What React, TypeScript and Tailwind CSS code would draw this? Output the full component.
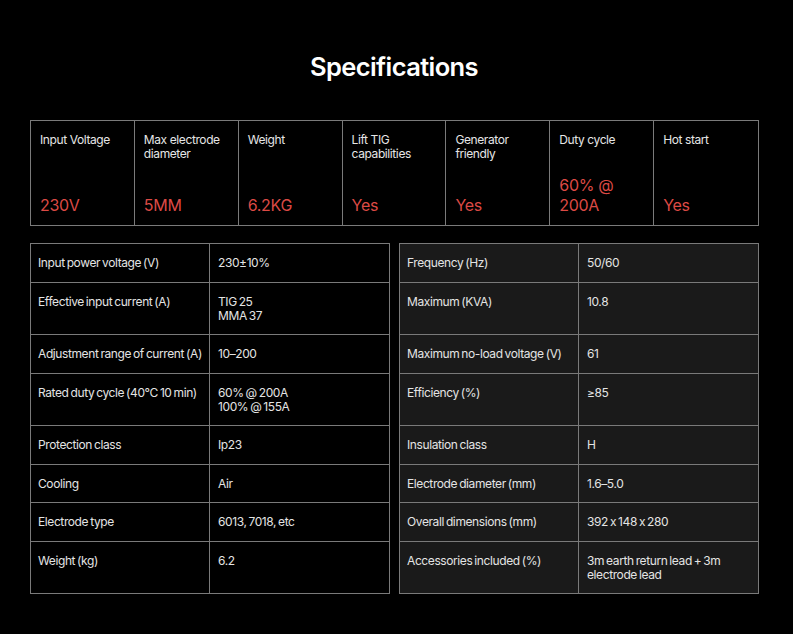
import React from 'react'

// Headline figures shown across the top strip
const HIGHLIGHTS: { label: string; value: string }[] = [
  { label: 'Input Voltage', value: '230V' },
  { label: 'Max electrode diameter', value: '5MM' },
  { label: 'Weight', value: '6.2KG' },
  { label: 'Lift TIG capabilities', value: 'Yes' },
  { label: 'Generator friendly', value: 'Yes' },
  { label: 'Duty cycle', value: '60% @ 200A' },
  { label: 'Hot start', value: 'Yes' },
]

type Row = [string, string[]]

const LEFT: Row[] = [
  ['Input power voltage (V)', ['230±10%']],
  ['Effective input current (A)', ['TIG 25', 'MMA 37']],
  ['Adjustment range of current (A)', ['10–200']],
  ['Rated duty cycle (40°C 10 min)', ['60% @ 200A', '100% @ 155A']],
  ['Protection class', ['Ip23']],
  ['Cooling', ['Air']],
  ['Electrode type', ['6013, 7018, etc']],
  ['Weight (kg)', ['6.2']],
]

const RIGHT: Row[] = [
  ['Frequency (Hz)', ['50/60']],
  ['Maximum (KVA)', ['10.8']],
  ['Maximum no-load voltage (V)', ['61']],
  ['Efficiency (%)', ['≥85']],
  ['Insulation class', ['H']],
  ['Electrode diameter (mm)', ['1.6–5.0']],
  ['Overall dimensions (mm)', ['392 x 148 x 280']],
  ['Accessories included (%)', ['3m earth return lead + 3m', 'electrode lead']],
]

function Half({ row, first, dark }: { row: Row; first: boolean; dark: boolean }) {
  return (
    <div
      className={`grid grid-cols-[179px_1fr] border-x border-b border-[#7a7a7a] ${first ? 'border-t' : ''} ${
        dark ? 'bg-[#1a1a1a]' : 'bg-black'
      }`}
    >
      <div className="border-r border-[#7a7a7a] pl-[7px] pt-[12px] pb-[11.5px] leading-[14px] whitespace-nowrap">
        {row[0]}
      </div>
      <div className="pl-[8px] pr-2 pt-[12px] pb-[11.5px] leading-[14px]">
        {row[1].map((v) => (
          <div key={v}>{v}</div>
        ))}
      </div>
    </div>
  )
}

export default function App() {
  return (
    <div
      className="min-h-[634px] w-full bg-black text-[#e8e8e8] pt-[50px] pl-[30px]"
      style={{ fontFamily: 'Inter, "Noto Sans", sans-serif' }}
    >
      <h1 className="w-[728px] text-center text-[25.5px] leading-[34px] font-semibold tracking-[-0.6px] text-white">
        Specifications
      </h1>

      <div className="mt-[36px] w-[729px] grid grid-cols-7 border border-[#7a7a7a] divide-x divide-[#7a7a7a] h-[106px]">
        {HIGHLIGHTS.map((h) => (
          <div key={h.label} className="flex flex-col justify-between pt-[12px] pb-[10px] pl-[9px] pr-2">
            <div className="text-[12px] leading-[14px] tracking-[-0.4px] text-[#e6e6e6]">{h.label}</div>
            <div className="text-[16px] leading-[20px] tracking-[-0.3px] text-[#dc4a45]">{h.value}</div>
          </div>
        ))}
      </div>

      <div className="mt-[17px] w-[729px] grid grid-cols-[360px_360px] gap-x-[9px] text-[12px] tracking-[-0.4px] [word-spacing:-1px] text-[#e4e4e4]">
        {LEFT.map((row, i) => (
          <React.Fragment key={row[0]}>
            <Half row={row} first={i === 0} dark={false} />
            <Half row={RIGHT[i]} first={i === 0} dark />
          </React.Fragment>
        ))}
      </div>
    </div>
  )
}
